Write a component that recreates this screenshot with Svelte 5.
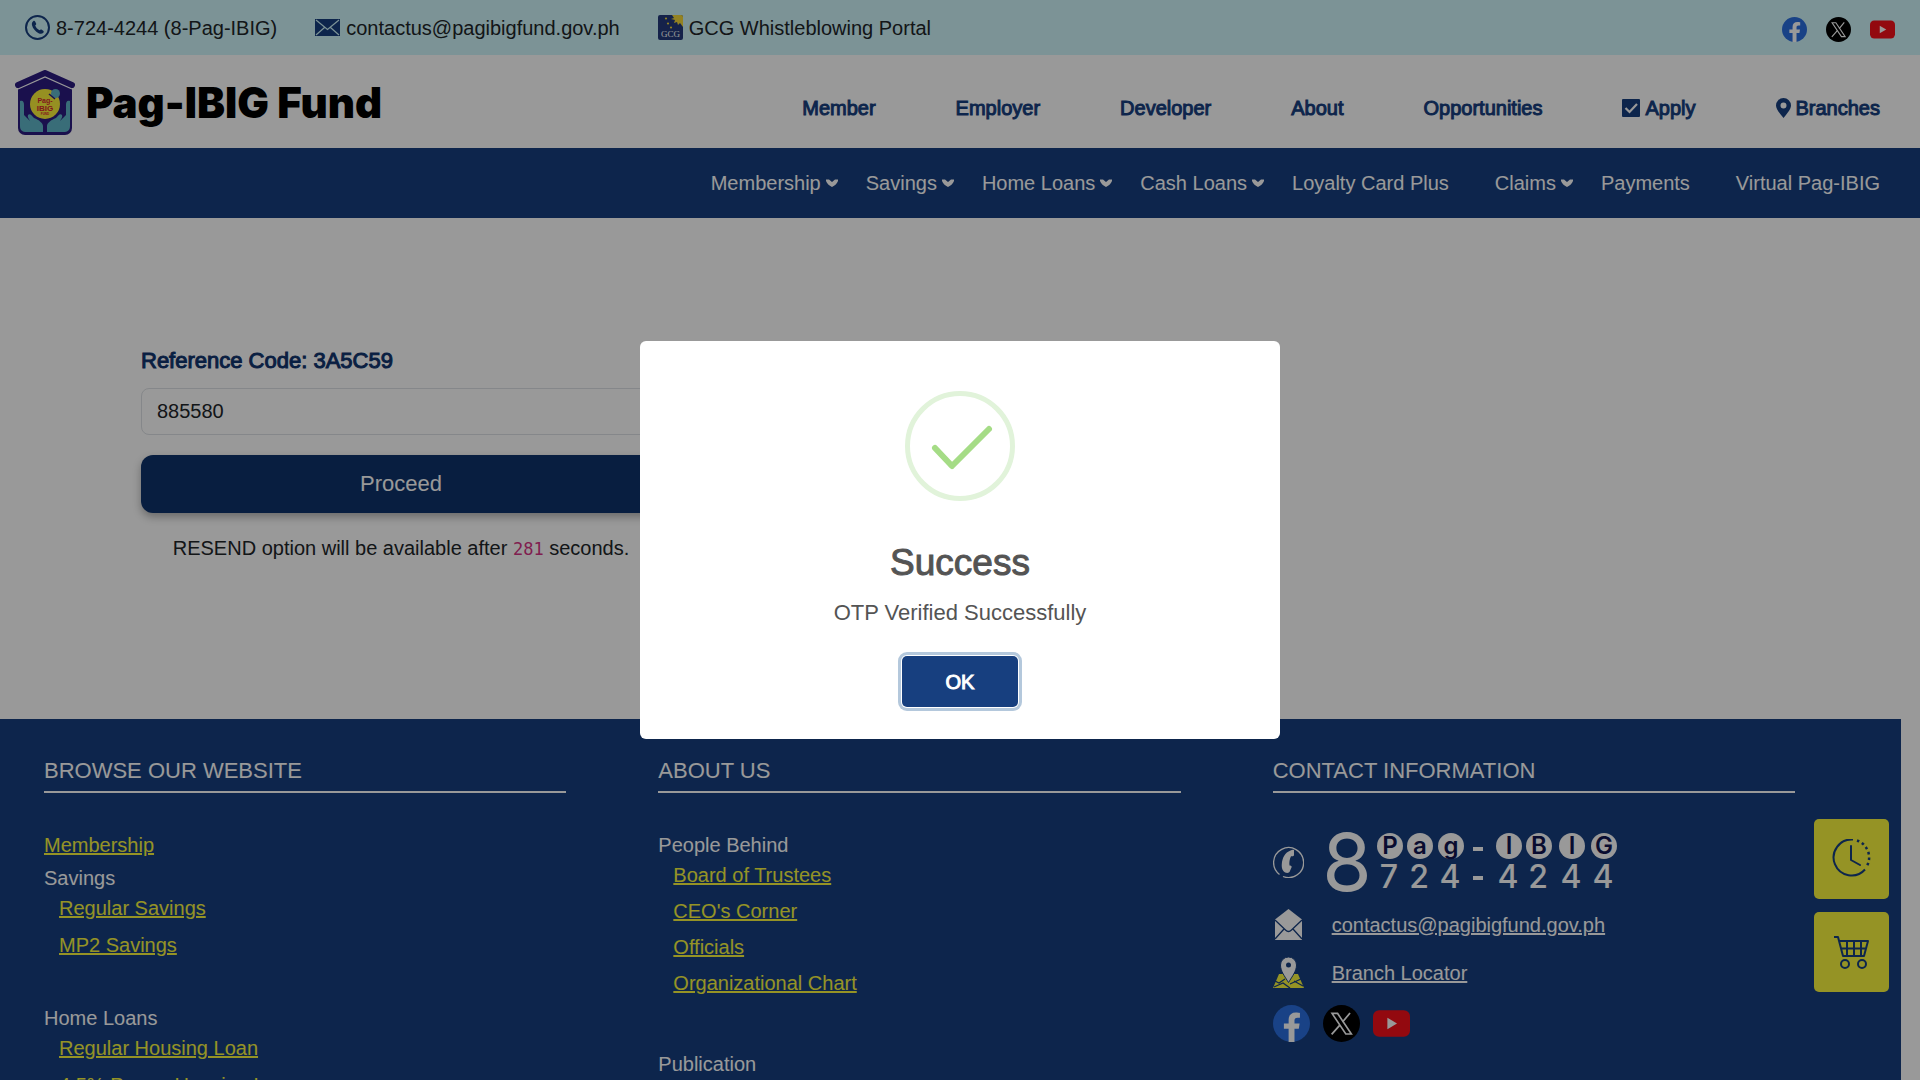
<script lang="ts">
  interface NavItem {
    label: string;
    menu?: boolean;
    icon?: 'check' | 'pin';
  }

  interface LinkGroup {
    title: string;
    href?: string;
    links: string[];
  }

  const audiences: NavItem[] = [
    { label: 'Member' },
    { label: 'Employer' },
    { label: 'Developer' },
    { label: 'About' },
    { label: 'Opportunities' },
    { label: 'Apply', icon: 'check' },
    { label: 'Branches', icon: 'pin' }
  ];

  const services: NavItem[] = [
    { label: 'Membership', menu: true },
    { label: 'Savings', menu: true },
    { label: 'Home Loans', menu: true },
    { label: 'Cash Loans', menu: true },
    { label: 'Loyalty Card Plus' },
    { label: 'Claims', menu: true },
    { label: 'Payments' },
    { label: 'Virtual Pag-IBIG' }
  ];

  const browse: LinkGroup[] = [
    { title: 'Membership', href: '#membership', links: [] },
    { title: 'Savings', links: ['Regular Savings', 'MP2 Savings'] },
    { title: 'Home Loans', links: ['Regular Housing Loan', '4.5% Promo Housing Loan'] }
  ];

  const about: LinkGroup[] = [
    {
      title: 'People Behind',
      links: ['Board of Trustees', "CEO's Corner", 'Officials', 'Organizational Chart']
    },
    { title: 'Publication', links: [] }
  ];

  const keypad = [
    { x: 64, letter: 'P', digit: '7' },
    { x: 94, letter: 'a', digit: '2' },
    { x: 125, letter: 'g', digit: '4' },
    { x: 183, letter: 'I', digit: '4' },
    { x: 213, letter: 'B', digit: '2' },
    { x: 246, letter: 'I', digit: '4' },
    { x: 278, letter: 'G', digit: '4' }
  ];

  let otp = $state('885580');
  let seconds = $state(281);
  let showAlert = $state(true);
</script>

{#snippet facebook(size: number)}
  <svg width={size} height={size} viewBox="0 0 36 36" aria-hidden="true">
    <circle cx="18" cy="18" r="18" fill="#2b6fe0" />
    <path
      d="M15.2 36V23.2h-4.6v-5.1h4.6v-3.6c0-4.7 2.7-7.2 7-7.2 1.6 0 3.2.2 4 .4v4.6h-2.3c-2.3 0-3 1.3-3 2.8v3h5l-.8 5.1h-4.2V36z"
      fill="#fff"
    />
  </svg>
{/snippet}

{#snippet xlogo(size: number)}
  <svg width={size} height={size} viewBox="0 0 36 36" aria-hidden="true">
    <circle cx="18" cy="18" r="18" fill="#000" />
    <path d="M8.8 8.2h5.4l13.4 20h-5.4z" fill="none" stroke="#fff" stroke-width="1.6" />
    <path d="M26.3 7.8 19 16.6M16.6 19.4 8.4 28.6" stroke="#fff" stroke-width="1.7" />
  </svg>
{/snippet}

{#snippet youtube(size: number)}
  <svg width={size} height={size} viewBox="0 0 36 36" aria-hidden="true">
    <rect y="5" width="36" height="26" rx="6" fill="#f6101a" />
    <path d="m14 12.5 9.4 5.5-9.4 5.5z" fill="#fff" />
  </svg>
{/snippet}

{#snippet linkGroups(groups: LinkGroup[])}
  {#each groups as group (group.title)}
    <div class="group" class:single={group.href}>
      {#if group.href}
        <a href={group.href}>{group.title}</a>
      {:else}
        <span>{group.title}</span>
      {/if}
      {#if group.links.length}
        <ul>
          {#each group.links as link (link)}
            <li><a href="#footer">{link}</a></li>
          {/each}
        </ul>
      {/if}
    </div>
  {/each}
{/snippet}

<div class="topbar">
  <a href="tel:87244244">
    <svg width="25" height="25" viewBox="0 0 25 25" aria-hidden="true">
      <circle cx="12.5" cy="12.5" r="11.5" fill="none" stroke="#173f7f" stroke-width="2" />
      <path
        d="M8.2 6.2c.8-.7 1.5-.4 1.9.3l1 1.9c.3.6 0 1.2-.9 1.9.5 2 2.3 4.1 4.3 5 .8-.9 1.4-1.1 2-.7l1.7 1.2c.7.5.7 1.2.1 1.9-1.1 1.3-2.8 1.5-4.7.5-3.2-1.7-5.7-4.7-6.6-8-.4-1.7 0-3.1 1.2-4z"
        fill="#173f7f"
      />
    </svg>
    8-724-4244 (8-Pag-IBIG)
  </a>
  <a href="mailto:contactus@pagibigfund.gov.ph">
    <svg width="25" height="17" viewBox="0 0 25 17" aria-hidden="true">
      <rect width="25" height="17" fill="#173f7f" />
      <path
        d="m1 1 11.5 9.5L24 1M1 16l8.5-7.5M24 16l-8.5-7.5"
        fill="none"
        stroke="#cff5fa"
        stroke-width="1.2"
      />
    </svg>
    contactus@pagibigfund.gov.ph
  </a>
  <a href="#whistleblowing">
    <svg width="25" height="25" viewBox="0 0 25 25" aria-hidden="true">
      <rect width="25" height="25" rx="2" fill="#233a7c" />
      <path d="M14 0h9a2 2 0 0 1 2 2v10l-3-4-2 2-1-3-3 1 1-3-4-1 3-1z" fill="#f5d93a" />
      <g fill="#f5d93a">
        <circle cx="8" cy="3.5" r="1.1" />
        <circle cx="10" cy="8.5" r="1.1" />
        <circle cx="13" cy="12.5" r="1.1" />
      </g>
      <text x="12.5" y="22" class="gcg">GCG</text>
    </svg>
    GCG Whistleblowing Portal
  </a>
  <div class="social">
    <a href="#facebook" aria-label="Facebook">{@render facebook(25)}</a>
    <a href="#x" aria-label="X">{@render xlogo(25)}</a>
    <a href="#youtube" aria-label="YouTube">{@render youtube(25)}</a>
  </div>
</div>

<header>
  <a class="brand" href="#home">
    <svg width="60" height="66" viewBox="0 0 60 66" aria-hidden="true">
      <path d="M3 17 30 3l27 14v41a7 7 0 0 1-7 7H10a7 7 0 0 1-7-7z" fill="#2c1c80" />
      <path
        d="M3 15 30 3l27 12"
        fill="none"
        stroke="#2c1c80"
        stroke-width="6"
        stroke-linecap="round"
        stroke-linejoin="round"
      />
      <path d="M3 19 30 7l27 12" fill="none" stroke="#fff" stroke-width="1.2" />
      <g fill="#5fb6c8">
        <path d="M5 31c3-1 4 1 4 4v10l6 6c-1-2-3-4-2-6 2-2 4 1 6 3 5 2 9 5 9 8v6H12c-5 0-7-2-7-6z" />
        <path d="M55 31c-3-1-4 1-4 4v10l-6 6c1-2 3-4 2-6-2-2-4 1-6 3-5 2-9 5-9 8v6h16c5 0 7-2 7-6z" />
      </g>
      <circle cx="30" cy="34" r="15" fill="#fbf03a" />
      <circle cx="40.5" cy="23.5" r="4.5" fill="#5fb6c8" />
      <path d="m34 24 6 5" stroke="#2c1c80" stroke-width="1.5" />
      <g class="badge">
        <text x="30" y="33" font-size="7">Pag-</text>
        <text x="30" y="41" font-size="8">IBIG</text>
        <text x="30" y="45" font-size="3">FUND</text>
      </g>
    </svg>
    <span>Pag-IBIG Fund</span>
  </a>
  <nav class="audiences" aria-label="Audiences">
    {#each audiences as item (item.label)}
      <a href="#{item.label}">
        {#if item.icon === 'check'}
          <svg width="18" height="18" viewBox="0 0 18 18" aria-hidden="true">
            <rect width="18" height="18" rx="1" fill="#173f7f" />
            <path d="m3.5 9 4 4L15 5" fill="none" stroke="#fff" stroke-width="2.2" />
          </svg>
        {:else if item.icon === 'pin'}
          <svg width="15" height="20" viewBox="0 0 15 20" aria-hidden="true">
            <path
              d="M7.5 0A7.5 7.5 0 0 1 15 7.500C15 11 11.500 15 7.500 20 3.500 15 0 11 0 7.500A7.500 7.500 0 0 1 7.500 0zm0 4.500a3 3 0 1 0 0 6 3 3 0 0 0 0-6z"
              fill="#173f7f"
            />
          </svg>
        {/if}
        {item.label}
      </a>
    {/each}
  </nav>
</header>

<nav class="services" aria-label="Services">
  {#each services as item (item.label)}
    <a href="#{item.label}" class:plain={!item.menu}>
      {item.label}
      {#if item.menu}
        <svg width="12" height="8" viewBox="0 0 12 8" aria-hidden="true">
          <path d="M0 .5h3L6 3l3-2.500h3v1.500C11 4.500 9 6.500 6 8 3 6.500 1 4.500 0 2z" fill="#fff" />
        </svg>
      {/if}
    </a>
  {/each}
</nav>

<main>
  <form onsubmit={(event) => event.preventDefault()}>
    <label for="otp">Reference Code: 3A5C59</label>
    <input id="otp" type="text" inputmode="numeric" bind:value={otp} />
    <button type="submit">Proceed</button>
    <p>RESEND option will be available after <code>{seconds}</code> seconds.</p>
  </form>
</main>

<footer id="footer">
  <section>
    <h2>BROWSE OUR WEBSITE</h2>
    {@render linkGroups(browse)}
  </section>
  <section class="about">
    <h2>ABOUT US</h2>
    {@render linkGroups(about)}
  </section>
  <section>
    <h2>CONTACT INFORMATION</h2>
    <div class="contact">
      <div class="row">
        <svg width="31" height="32" viewBox="0 0 31 32" aria-hidden="true">
          <path d="M6.500 28.500A15 15 0 1 1 10 30.500" fill="none" stroke="#fff" stroke-width="1.300" />
          <path
            d="M17.500 4.500c1.500-.8 2.500-.8 3.500-.5v5.500c-1 .8-2 1-3 .8-1.500 3.200-2 6.200-1.500 9.200 1 0 1.800.5 2.300 1.300L16.500 26c-1 .8-2.300 1.200-3.500.8-3.500-1.500-4.500-4.500-4.200-8.800.4-6 3.200-11.500 8.700-13.500z"
            fill="#fff"
          />
        </svg>
        <svg width="292" height="60" viewBox="0 0 292 60" role="img" aria-label="8 Pag-IBIG, 8724-4244">
          <text class="eight" x="21" y="59">8</text>
          {#each keypad as key (key.x)}
            <circle cx={key.x} cy="14" r="13" fill="#fff" />
            <text class="letter" x={key.x} y="22">{key.letter}</text>
            <text class="digit" x={key.x - 1} y="56">{key.digit}</text>
          {/each}
          <path d="M147 17h10M147 46h10" stroke="#fff" stroke-width="4" />
        </svg>
      </div>
      <div class="row">
        <svg width="31" height="31" viewBox="0 0 31 31" aria-hidden="true">
          <path d="M15.500 0 29 10.500V31H2V10.500z" fill="#fff" />
          <path
            d="m2 11 10.500 10c2 2 4 2 6 0L29 11M2 30l9-10M29 30l-9-10"
            fill="none"
            stroke="#173f7f"
            stroke-width="1.300"
          />
        </svg>
        <a href="mailto:contactus@pagibigfund.gov.ph">contactus@pagibigfund.gov.ph</a>
      </div>
      <div class="row">
        <svg width="31" height="31" viewBox="0 0 31 31" aria-hidden="true">
          <path d="M6 17h19l6 14H0z" fill="#f8f53f" />
          <path d="m2 24 4 2 6-4M1 30l9-4 7 5M28 22l-11 5M21 24l9 5" fill="none" stroke="#173f7f" stroke-width="1.300" />
          <path
            d="M15.500 0a8 8 0 0 1 8 8c0 6-4 11-8 17.500-4-6.500-8-11.500-8-17.500a8 8 0 0 1 8-8z"
            fill="#fff"
            stroke="#173f7f"
            stroke-width="1"
          />
          <circle cx="15.500" cy="8" r="2.500" fill="#173f7f" />
        </svg>
        <a href="#branches">Branch Locator</a>
      </div>
      <div class="follow">
        <a href="#facebook" aria-label="Facebook">{@render facebook(37)}</a>
        <a href="#x" aria-label="X">{@render xlogo(37)}</a>
        <a href="#youtube" aria-label="YouTube">{@render youtube(37)}</a>
      </div>
    </div>
  </section>
</footer>

<aside>
  <button type="button" aria-label="Office hours">
    <svg width="40" height="40" viewBox="1 2 40 40" fill="none" stroke="#173f7f" stroke-width="2">
      <path d="M22 2.500a18 18 0 1 0 12 30" />
      <path d="M26 3.500A18 18 0 0 1 36 29" stroke-width="2.500" stroke-dasharray="2.500 3" />
      <path d="M20 9v14l9 5" stroke-linecap="round" stroke-linejoin="round" />
    </svg>
  </button>
  <button type="button" aria-label="Acquired assets for sale">
    <svg width="40" height="40" viewBox="0 0 40 40" fill="none" stroke="#173f7f" stroke-width="2">
      <path d="M2 5h4l5 19h21l4-15H7M9 16.500h25M15 9v15M22 9v15M29 9v15" stroke-linejoin="round" />
      <circle cx="13" cy="32" r="4" />
      <circle cx="30" cy="32" r="4" />
    </svg>
  </button>
</aside>

{#if showAlert}
  <div class="overlay">
    <div class="alert" role="alertdialog" aria-modal="true" aria-labelledby="alert-title">
      <svg width="110" height="110" viewBox="0 0 110 110" aria-hidden="true">
        <circle cx="55" cy="55" r="52.500" fill="none" stroke="#e1f3da" stroke-width="5" />
        <path
          d="m30 57 17 18 37-37"
          fill="none"
          stroke="#a5dc86"
          stroke-width="6"
          stroke-linecap="round"
          stroke-linejoin="round"
        />
      </svg>
      <h2 id="alert-title">Success</h2>
      <p>OTP Verified Successfully</p>
      <button type="button" onclick={() => (showAlert = false)}>OK</button>
    </div>
  </div>
{/if}

<style>
  :global(body) {
    overflow: hidden;
    background: #fff;
    color: #212529;
    font: 20px/30px 'Liberation Sans', Arial, sans-serif;
  }

  svg {
    flex: none;
  }

  a {
    color: inherit;
  }

  button,
  input {
    font: inherit;
  }

  h2,
  p,
  ul {
    margin: 0;
    padding: 0;
    font-weight: 400;
    list-style: none;
  }

  .topbar {
    display: flex;
    align-items: center;
    gap: 38px;
    height: 55px;
    padding: 0 25px;
    background: #cff5fa;

    & a {
      display: flex;
      align-items: center;
      gap: 6px;
      text-decoration: none;
    }
  }

  .gcg {
    fill: #fff;
    font: 9px 'Liberation Serif', serif;
    text-anchor: middle;
  }

  .social {
    display: flex;
    gap: 19px;
    margin-left: auto;
    padding-top: 4px;
  }

  header {
    display: flex;
    align-items: end;
    justify-content: space-between;
    height: 93px;
    padding: 0 40px 0 15px;
    box-sizing: border-box;
  }

  .brand {
    display: flex;
    align-items: center;
    gap: 11px;
    padding-bottom: 12px;
    color: #000;
    font: 900 42px/66px Inter, sans-serif;
    text-decoration: none;
  }

  .badge {
    fill: #d8282f;
    font-family: 'Liberation Sans', sans-serif;
    font-weight: 700;
    text-anchor: middle;
  }

  .audiences {
    display: flex;
    gap: 80px;
    padding-bottom: 25px;
    color: #173f7f;
    -webkit-text-stroke: 1px currentColor;

    & a {
      display: flex;
      align-items: center;
      gap: 5px;
      text-decoration: none;
    }
  }

  .services {
    display: flex;
    justify-content: end;
    gap: 28px;
    padding: 20px 22px 20px 0;
    background: #173f7f;
    color: #fff;

    & a {
      display: flex;
      align-items: center;
      gap: 5px;
      text-decoration: none;
    }

    & .plain {
      padding-right: 18px;
    }
  }

  main {
    padding: 126px 141px 156px;
  }

  form {
    display: flex;
    flex-direction: column;
    max-width: 520px;

    & label {
      color: #10346e;
      font-size: 22px;
      line-height: 33px;
      -webkit-text-stroke: 1px currentColor;
    }

    & input {
      height: 47px;
      margin-top: 11px;
      padding: 0 15px;
      border: 1px solid #dee2e6;
      border-radius: 8px;
      box-sizing: border-box;
      background: #fff;
      color: #212529;
    }

    & button {
      margin: 20px 0;
      padding: 12px;
      border: 0;
      border-radius: 12px;
      background: #0e336b;
      box-shadow: 0 4px 8px rgb(0 0 0 / 0.3);
      color: #fff;
      font-size: 22px;
      line-height: 34px;
    }

    & p {
      text-align: center;
    }

    & code {
      color: #d63384;
      font: 17px 'DejaVu Sans Mono', monospace;
    }
  }

  footer {
    display: grid;
    grid-template-columns: repeat(3, 1fr);
    margin-right: 19px;
    padding: 35px 14px 60px 44px;
    background: #173f7f;
    color: #fff;
  }

  section {
    width: 85%;

    & h2 {
      margin-bottom: 37px;
      padding-bottom: 4px;
      border-bottom: 2px solid #fff;
      font-size: 22px;
      line-height: 33px;
    }
  }

  .group {
    display: flex;
    flex-direction: column;
    align-items: start;
    margin-bottom: 36px;

    & a {
      color: #f8f53f;
    }

    & ul {
      padding-left: 15px;
    }

    & li {
      margin-bottom: 7px;
    }
  }

  .single {
    margin-bottom: 3px;
  }

  .about {
    & .group {
      margin-bottom: 45px;
    }

    & li {
      margin-bottom: 6px;
    }
  }

  .contact {
    display: flex;
    flex-direction: column;
    gap: 17px;
    padding-top: 2px;
  }

  .row {
    display: flex;
    align-items: center;
    gap: 22px;

    & a {
      padding-left: 6px;
    }
  }

  .eight,
  .letter,
  .digit {
    fill: #fff;
    font-family: Inter, sans-serif;
    text-anchor: middle;
  }

  .eight {
    font-size: 80px;
  }

  .letter {
    fill: #101450;
    font-size: 24px;
    font-weight: 600;
  }

  .digit {
    font-size: 32px;
    font-weight: 500;
  }

  .follow {
    display: flex;
    gap: 13px;

    & svg {
      display: block;
    }
  }

  aside {
    position: fixed;
    top: 819px;
    right: 31px;
    display: grid;
    gap: 13px;

    & button {
      display: grid;
      place-items: center;
      width: 75px;
      height: 80px;
      padding: 0;
      border: 0;
      border-radius: 5px;
      background: #f8f53f;
    }
  }

  .overlay {
    position: fixed;
    inset: 0;
    display: grid;
    place-items: center;
    background: rgb(0 0 0 / 0.4);
  }

  .alert {
    display: flex;
    flex-direction: column;
    align-items: center;
    width: 640px;
    padding: 50px 0 32px;
    box-sizing: border-box;
    border-radius: 6px;
    background: #fff;
    color: #545454;

    & h2 {
      margin-top: 34px;
      font-size: 37px;
      line-height: 56px;
      -webkit-text-stroke: 1px currentColor;
    }

    & p {
      margin-top: 5px;
      font-size: 22px;
      line-height: 34px;
    }

    & button {
      margin-top: 26px;
      padding: 11px 44px 10px;
      border: 0;
      border-radius: 5px;
      background: #173f7f;
      box-shadow:
        0 0 0 1px #fff,
        0 0 0 4px #b4c8dc;
      color: #fff;
      -webkit-text-stroke: 1px currentColor;
    }
  }
</style>
